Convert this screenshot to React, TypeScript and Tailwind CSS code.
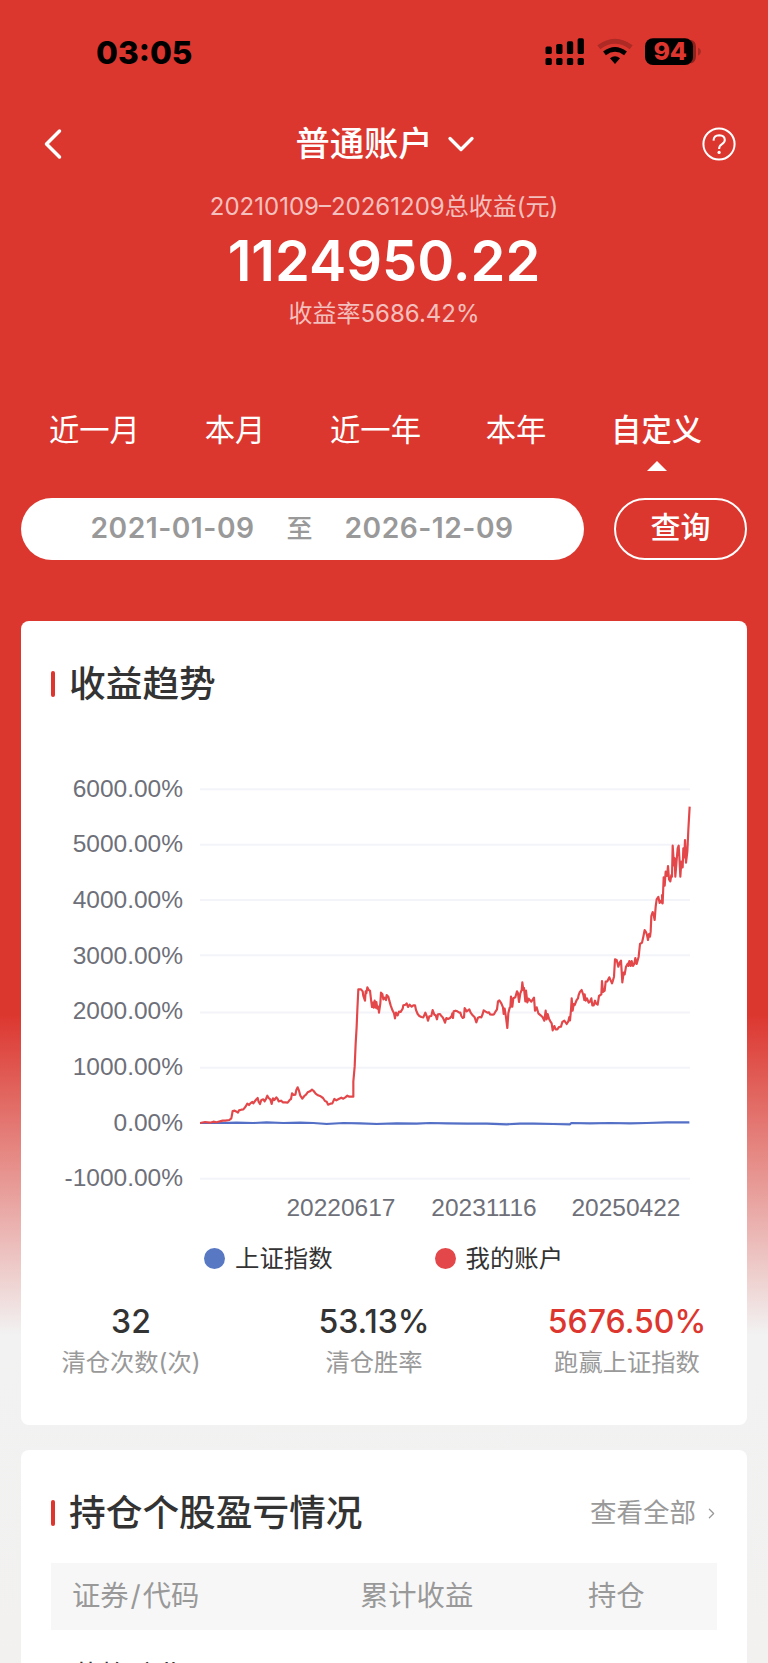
import { ChevronDown, ChevronLeft, ChevronRight } from 'lucide-react';
import clsx from 'clsx';

const tabs = [
  { label: '近一月', active: false },
  { label: '本月', active: false },
  { label: '近一年', active: false },
  { label: '本年', active: false },
  { label: '自定义', active: true },
];

const yLabels = ['6000.00%', '5000.00%', '4000.00%', '3000.00%', '2000.00%', '1000.00%', '0.00%', '-1000.00%'];
const gridLines = [28, 194, 360, 526, 697.5, 863.5, 1029, 1196];

const stats = [
  { value: '32', label: '清仓次数(次)', width: 'w-[140px]', color: 'text-[#333]' },
  { value: '53.13%', label: '清仓胜率', width: 'w-[140px]', color: 'text-[#333]' },
  { value: '5676.50%', label: '跑赢上证指数', width: 'w-[160px]', color: 'text-[#dc362e]' },
];

// chart units are a third of a pixel
const accountEarly =
  '0,1029 15,1026 30,1028 40,1025 50,1027 60,1024 68,1022 76,1022 88,1020 94,1015 98,993 104,992 110,995 114,998 117,991 124,989 130,988 136,981 142,971 147,975 151,970 157,966 160,970 165,963 170,957 173,954 176,966 180,972 184,960 190,958 194,964 198,957 202,947 206,954 211,958 215,972 219,955 223,960 229,952 233,957 236,964 243,962 249,967 256,967 263,968 270,959 273,957 276,940 281,945 286,944 289,930 293,922 297,932 301,947 307,956 313,948 318,944 323,937 330,934 336,929 341,933 347,941 354,946 362,949 369,954 375,963 380,965 384,974 391,971 397,970 403,957 409,961 416,957 424,953 430,956 436,952 442,947 448,950 460,950 460,905 464,860 467,790 470,740 472,690 475,628 483,628 488,634 490,648 495,662 497,634 499,640 502,622 506,630 510,632 513,658 516,681 519,668 521,683 524,662 527,683 529,666 532,686 535,680 537,698 541,670 543,638 547,642 550,658 554,653 558,660 560,645 565,650 568,662 572,676 577,690 582,700 585,715 588,698 593,706 597,695 602,696 608,686 610,676 617,674 620,670 624,681 629,674 635,680 640,676 645,676 648,690 653,702 658,708 664,711 670,712 676,698 680,708 684,722 688,709 694,708 698,690 703,704 707,706 711,718 714,703';
const accountLate =
  '720,702 724,708 728,712 732,720 735,728 739,714 744,717 750,714 755,708 757,700 759,714 761,694 767,692 772,694 778,698 781,698 784,708 788,714 792,712 794,684 800,694 808,688 812,698 818,706 824,712 829,727 834,713 839,711 844,712 848,702 851,691 857,695 862,698 867,697 870,703 877,704 882,703 887,694 891,688 894,664 898,661 904,670 909,682 911,702 914,686 918,712 922,744 925,700 929,683 931,682 933,650 937,680 940,655 946,652 951,634 954,640 957,666 961,640 965,630 967,607 970,630 972,624 976,664 978,632 982,667 986,656 994,665 1002,653 1005,692 1010,682 1015,700 1022,706 1028,712 1033,722 1037,692 1040,718 1043,702 1047,716 1051,724 1055,730 1058,751 1063,738 1067,748 1072,748 1077,741 1083,740 1087,726 1093,722 1100,732 1105,724 1108,711 1110,721 1113,690 1115,655 1118,692 1121,672 1124,675 1130,660 1134,655 1136,645 1140,635 1145,630 1150,645 1153,660 1154,643 1157,662 1161,655 1166,668 1170,665 1174,655 1177,676 1181,676 1185,662 1188,671 1193,674 1197,648 1204,643 1206,603 1209,636 1214,632 1217,605 1222,604 1228,592 1232,601 1236,610 1239,601 1242,590 1245,538 1250,540 1255,560 1259,548 1263,542 1267,607 1271,578 1274,583 1278,560 1283,551 1285,558 1288,543 1292,558 1295,543 1299,558 1303,551 1306,534 1310,552 1316,530 1320,492 1326,488 1330,470 1334,450 1338,456 1341,465 1344,480 1347,462 1350,470 1352,455 1354,408 1358,396 1361,405 1364,420 1367,380 1370,358 1375,351 1379,369 1383,362 1387,370 1386,345 1388,370 1391,292 1394,317 1397,275 1401,288 1404,258 1407,298 1411,304 1414,285 1416,290 1418,197 1422,256 1424,235 1426,290 1430,240 1433,205 1436,197 1438,230 1441,290 1444,245 1448,262 1450,205 1453,232 1455,180 1458,248 1462,215 1465,150 1469,80';
const indexLine =
  '0,1029 60,1029 110,1028 160,1029 200,1027 250,1029 300,1028 340,1029 380,1032 430,1029 480,1030 530,1032 590,1030 650,1031 690,1029 740,1030 800,1031 860,1031 920,1033 960,1031 1000,1031 1060,1032 1110,1033 1114,1029 1170,1030 1230,1029 1290,1030 1340,1029 1400,1027 1468,1027';

function StatusBar() {
  return (
    <div className="flex h-[104px] items-start justify-between pl-[96px] pr-[66px]">
      <span className="mt-[33px] text-[31.7px] leading-[40px] font-extrabold text-black">03:05</span>
      <svg width="158" height="30" viewBox="0 0 158 30" className="mt-[37px]">
        {[0, 10.7, 21.4, 32.1].map((x, i) => (
          <g key={x}>
            <rect x={1.5 + x} y={[9.5, 7, 4.3, 1.3][i]} width="6.3" height={[7.5, 10, 12.7, 15.7][i]} rx="1.6" />
            <rect x={1.5 + x} y="21" width="6.3" height="7" rx="1.6" />
          </g>
        ))}
        <g fill="none">
          <path d="M54.8 10.2 Q71 -1.8 87.2 10.2" stroke="#ad2a25" strokeWidth="5" />
          <path d="M60.5 16.3 Q71 8.3 81.5 16.3" stroke="#000" strokeWidth="4.6" />
        </g>
        <path d="M71 27 L66 21.2 Q71 17.2 76 21.2 Z" />
        <path d="M147 3 Q152 4 152 10 V19 Q152 25 147 26.5 Z" fill="#8e231e" />
        <rect x="101" y="1.2" width="48" height="26.8" rx="8" />
        <path d="M154 10.5 Q157 12 157 14.6 Q157 17.2 154 18.7 Z" fill="#a82a24" />
        <text x="126" y="23.3" textAnchor="middle" fill="#dc362e" className="text-[25px] font-extrabold tracking-[-0.3px]">94</text>
      </svg>
    </div>
  );
}

function SectionTitle({ title }: { title: string }) {
  return (
    <div className="flex items-center gap-[14px]">
      <span className="h-[26px] w-1 rounded-full bg-[#dc362e]" />
      <h2 className="text-[36.7px] leading-[50px] font-medium text-[#333]">{title}</h2>
    </div>
  );
}

function TrendChart() {
  return (
    <div className="mt-[52px] font-['Liberation_Sans']">
      <div className="flex">
        <div className="flex w-[132px] flex-col text-right text-[24.5px] text-[#6e7079]">
          {yLabels.map((label) => (
            <span key={label} className="h-[55.7px] leading-[55.7px] whitespace-nowrap">{label}</span>
          ))}
        </div>
        <svg width="492" height="410" viewBox="0 0 1476 1230" className="mt-[19px] ml-[17px]" fill="none">
          {gridLines.map((y) => (
            <path key={y} d={`M0 ${y}H1470`} stroke="#f3f4fa" strokeWidth="6" />
          ))}
          <polyline points={indexLine} stroke="#5470c6" strokeWidth="6.5" strokeLinejoin="round" />
          <polyline points={`${accountEarly} ${accountLate}`} stroke="#e3474a" strokeWidth="6.5" strokeLinejoin="round" />
        </svg>
      </div>
      <div className="-mt-[16px] flex h-[36px] items-center pl-[235px] text-[24.5px] text-[#6e7079]">
        <span className="w-[110px] text-center">20220617</span>
        <span className="ml-[33px] w-[110px] text-center">20231116</span>
        <span className="ml-[32px] w-[110px] text-center">20250422</span>
      </div>
    </div>
  );
}

export default function App() {
  return (
    <div className="h-[1663px] w-[768px] overflow-hidden bg-[linear-gradient(180deg,#dc372f_0px,#dc372f_1015px,#f2f2f2_1335px,#f2f1f0_1663px)] font-['Inter','Noto_Sans_CJK_SC',sans-serif]">
      <StatusBar />

      <header className="flex h-[79px] items-center justify-between pr-[32px] pl-[27px] text-white">
        <ChevronLeft size={52} strokeWidth={1.6} />
        <div className="flex items-center gap-[6px] pr-[3px]">
          <h1 className="text-[34.3px] leading-[50px] font-medium">普通账户</h1>
          <ChevronDown size={44} strokeWidth={1.8} />
        </div>
        <svg width="34" height="34" viewBox="0 0 34 34" fill="none" stroke="#fff" strokeWidth="2">
          <circle cx="17" cy="17" r="15.6" />
          <path d="M11.5 13.6 Q11.8 8.2 17.2 8.2 Q22.8 8.4 22.8 13 Q22.8 15.4 19.7 17.4 Q17.1 19 17.1 22" />
          <circle cx="17.1" cy="25.4" r="1.6" fill="#fff" stroke="none" />
        </svg>
      </header>

      <div className="flex flex-col items-center text-white">
        <p className="mt-[7px] text-[24px] leading-[34px] text-white/70">20210109–20261209总收益(元)</p>
        <p className="mt-[3px] text-[56px] leading-[68px] font-semibold">1124950.22</p>
        <p className="mt-[2px] text-[24px] leading-[34px] text-white/70">收益率5686.42%</p>
      </div>

      <nav className="mt-[77px] flex justify-between pr-[66px] pl-[49px] text-[30.3px] leading-[44px] text-white">
        {tabs.map((tab) => (
          <div key={tab.label} className="flex flex-col items-center">
            <span className={clsx(tab.active ? 'font-medium' : 'font-normal')}>{tab.label}</span>
            {tab.active && (
              <svg width="20" height="10" viewBox="0 0 20 10" className="mt-[9px]">
                <path d="M10 0L20 10H0Z" fill="#fff" />
              </svg>
            )}
          </div>
        ))}
      </nav>

      <div className="mt-[26.5px] flex justify-between pr-[21px] pl-[20.5px]">
        <div className="flex h-[62px] w-[563px] items-center rounded-full bg-white pl-[70px] text-[28.2px] font-semibold text-[#999]">
          <span className="w-[166px] tracking-[0.5px]">2021-01-09</span>
          <span className="ml-[30px] w-[26px] text-[26px] font-medium">至</span>
          <span className="ml-[32px] tracking-[0.5px]">2026-12-09</span>
        </div>
        <button className="h-[62px] w-[133px] rounded-full border-2 border-white pb-[2px] text-[30px] font-medium text-white">查询</button>
      </div>

      <section className="mr-[21px] ml-[20.5px] mt-[61px] h-[804.5px] rounded-lg bg-white pt-[38px] pl-[30.5px]">
        <SectionTitle title="收益趋势" />
        <TrendChart />
        <div className="mt-[14px] flex h-[36px] items-center pl-[153px] text-[24.4px] text-[#333]">
          <span className="size-[21px] rounded-full bg-[#5878c4]" />
          <span className="ml-[10px]">上证指数</span>
          <span className="ml-[102px] size-[21px] rounded-full bg-[#e3474a]" />
          <span className="ml-[10px]">我的账户</span>
        </div>
        <div className="mt-[24px] flex justify-between pr-[40px] pl-[10px]">
          {stats.map((stat) => (
            <div key={stat.label} className={clsx('flex flex-col items-center', stat.width)}>
              <span className={clsx('text-[32px] leading-[44px] font-medium', stat.color)}>{stat.value}</span>
              <span className="text-[24.3px] leading-[36px] whitespace-nowrap text-[#999]">{stat.label}</span>
            </div>
          ))}
        </div>
      </section>

      <section className="mr-[21px] ml-[20.5px] mt-[25px] h-[240px] rounded-t-lg bg-white pt-[38px] pr-[30px] pl-[30.5px]">
        <div className="flex items-center justify-between">
          <SectionTitle title="持仓个股盈亏情况" />
          <div className="-mr-[3px] flex items-center gap-[7px] text-[26.5px] text-[#999]">
            查看全部
            <ChevronRight size={17} strokeWidth={1.8} />
          </div>
        </div>
        <div className="mt-[25px] flex h-[67px] items-center bg-[#f7f7f7] pl-[21px] text-[28.3px] text-[#999]">
          <span className="w-[288px]">证券<span className="px-[2px]">/</span>代码</span>
          <span className="w-[228px]">累计收益</span>
          <span>持仓</span>
        </div>
        <p className="mt-[26px] pl-[21px] text-[28px] leading-[40px] text-[#333]">藏格矿业</p>
      </section>
    </div>
  );
}
